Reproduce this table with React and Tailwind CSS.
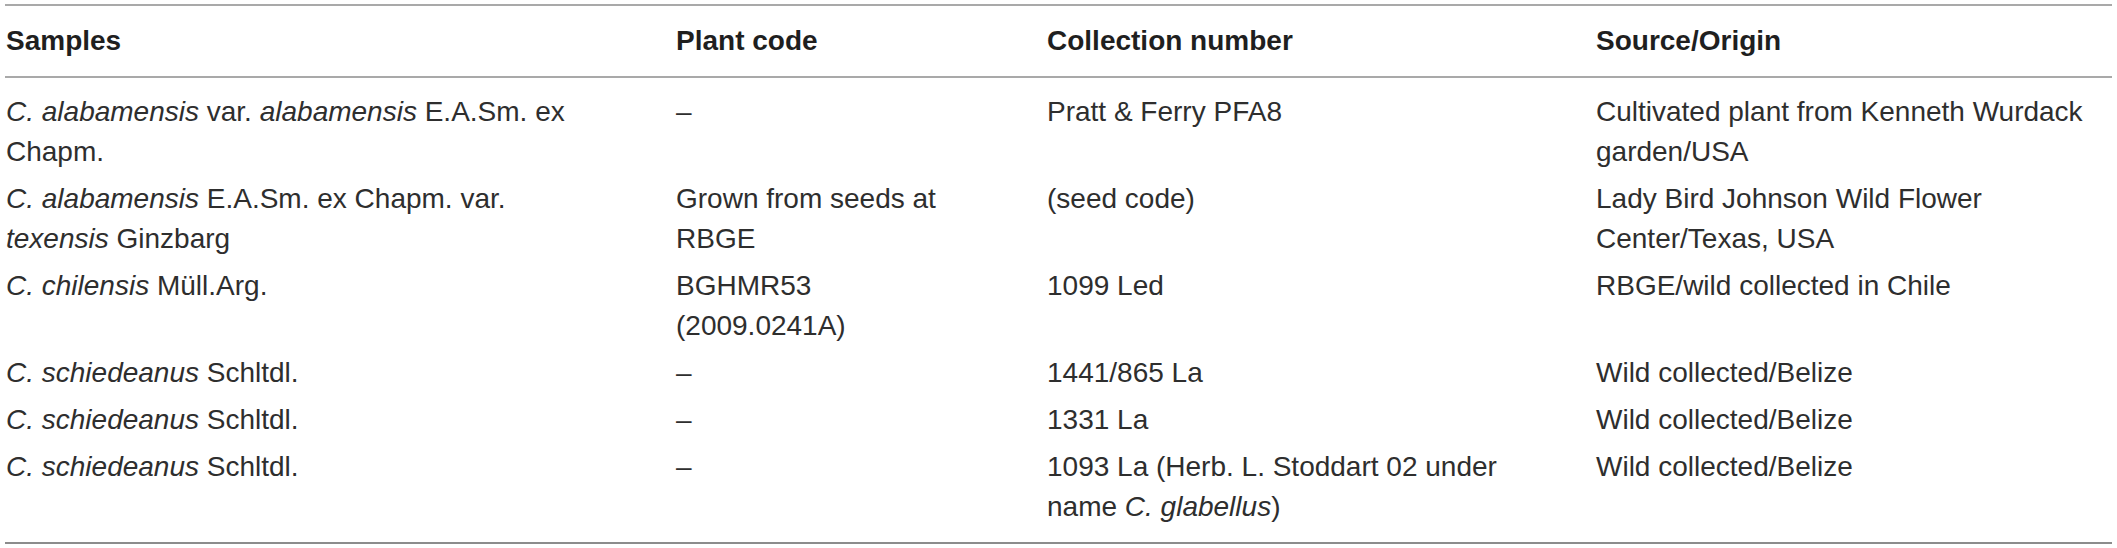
import React from "react";

const rows = [
  {
    a: (
      <>
        <i>C. alabamensis</i> var. <i>alabamensis</i> E.A.Sm. ex Chapm.
      </>
    ),
    b: "–",
    c: "Pratt & Ferry PFA8",
    d: "Cultivated plant from Kenneth Wurdack garden/USA",
  },
  {
    a: (
      <>
        <i>C. alabamensis</i> E.A.Sm. ex Chapm. var. <i>texensis</i> Ginzbarg
      </>
    ),
    b: "Grown from seeds at RBGE",
    c: "(seed code)",
    d: "Lady Bird Johnson Wild Flower Center/Texas, USA",
  },
  {
    a: (
      <>
        <i>C. chilensis</i> Müll.Arg.
      </>
    ),
    b: "BGHMR53 (2009.0241A)",
    c: "1099 Led",
    d: "RBGE/wild collected in Chile",
  },
  {
    a: (
      <>
        <i>C. schiedeanus</i> Schltdl.
      </>
    ),
    b: "–",
    c: "1441/865 La",
    d: "Wild collected/Belize",
  },
  {
    a: (
      <>
        <i>C. schiedeanus</i> Schltdl.
      </>
    ),
    b: "–",
    c: "1331 La",
    d: "Wild collected/Belize",
  },
  {
    a: (
      <>
        <i>C. schiedeanus</i> Schltdl.
      </>
    ),
    b: "–",
    c: (
      <>
        1093 La (Herb. L. Stoddart 02 under name <i>C. glabellus</i>)
      </>
    ),
    d: "Wild collected/Belize",
  },
];

export default function App() {
  return (
    <div
      className="w-[2117px] h-[548px] bg-white px-[5px] pt-[4px] text-[28px] leading-[40px]"
      style={{ fontFamily: '"Liberation Sans", Arial, sans-serif' }}
    >
      <div className="h-[2px] bg-[#a9a9a9]" />
      <div className="grid grid-cols-[670px_371px_549px_1fr] py-[15px] font-bold text-[#1f1f1f]">
        <div className="pl-[1px] pr-[70px]">Samples</div>
        <div className="pl-[1px] pr-[70px]">Plant code</div>
        <div className="pl-[1px] pr-[70px]">Collection number</div>
        <div className="pl-[1px]">Source/Origin</div>
      </div>
      <div className="h-[2px] bg-[#a9a9a9]" />
      <div className="pt-[10px] pb-[12px] text-[#2e2e2e]">
        {rows.map((r, i) => (
          <div
            key={i}
            className="grid grid-cols-[670px_371px_549px_1fr] py-[3.5px]"
          >
            <div className="pl-[1px] pr-[70px]">{r.a}</div>
            <div className="pl-[1px] pr-[70px]">{r.b}</div>
            <div className="pl-[1px] pr-[70px]">{r.c}</div>
            <div className="pl-[1px]">{r.d}</div>
          </div>
        ))}
      </div>
      <div className="h-[2px] bg-[#8c8c8c]" />
    </div>
  );
}
